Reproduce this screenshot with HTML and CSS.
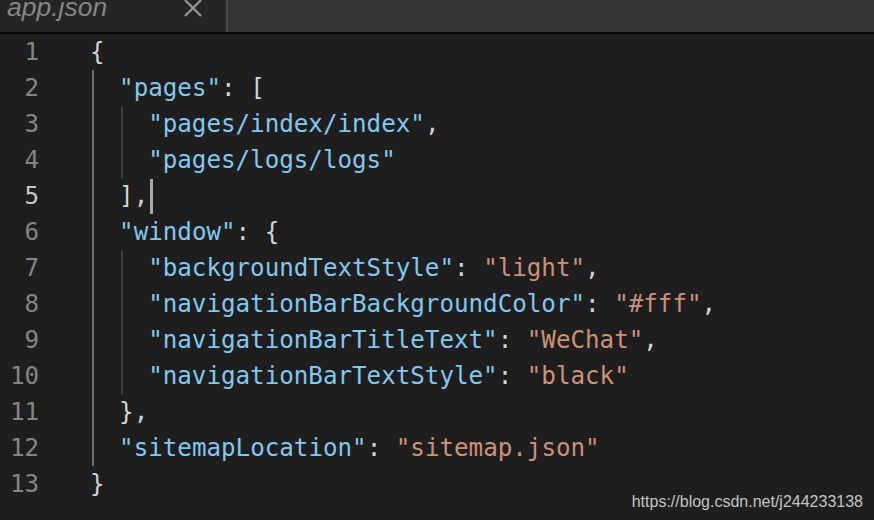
FILE: index.html
```html
<!DOCTYPE html>
<html>
<head>
<meta charset="utf-8">
<link rel="stylesheet" href="styles.css">
</head>
<body>
<div class="tabbar">
  <div class="tab">
    <span class="tab-title">app.json</span>
    <svg class="tab-close" width="20" height="20" viewBox="0 0 20 20"><path d="M2 0 L18 16 M18 0 L2 16" stroke="#9a9a9a" stroke-width="2.2" fill="none"/></svg>
  </div>
  <div class="tab-rest"></div>
</div>
<div class="editor">
  <div class="gutter">
    <div class="ln">1</div><div class="ln">2</div><div class="ln">3</div><div class="ln">4</div>
    <div class="ln active">5</div><div class="ln">6</div><div class="ln">7</div><div class="ln">8</div>
    <div class="ln">9</div><div class="ln">10</div><div class="ln">11</div><div class="ln">12</div><div class="ln">13</div>
  </div>
  <div class="code">
    <div class="line"><span class="p">{</span></div>
    <div class="line"><span class="g g1"></span><span class="ind1"></span><span class="k">"pages"</span><span class="p">: [</span></div>
    <div class="line"><span class="g g1"></span><span class="g g2"></span><span class="ind2"></span><span class="k">"pages/index/index"</span><span class="p">,</span></div>
    <div class="line"><span class="g g1"></span><span class="g g2"></span><span class="ind2"></span><span class="k">"pages/logs/logs"</span></div>
    <div class="line"><span class="g g1"></span><span class="ind1"></span><span class="p">],</span><span class="cursor"></span></div>
    <div class="line"><span class="g g1"></span><span class="ind1"></span><span class="k">"window"</span><span class="p">: {</span></div>
    <div class="line"><span class="g g1"></span><span class="g g2"></span><span class="ind2"></span><span class="k">"backgroundTextStyle"</span><span class="p">: </span><span class="s">"light"</span><span class="p">,</span></div>
    <div class="line"><span class="g g1"></span><span class="g g2"></span><span class="ind2"></span><span class="k">"navigationBarBackgroundColor"</span><span class="p">: </span><span class="s">"#fff"</span><span class="p">,</span></div>
    <div class="line"><span class="g g1"></span><span class="g g2"></span><span class="ind2"></span><span class="k">"navigationBarTitleText"</span><span class="p">: </span><span class="s">"WeChat"</span><span class="p">,</span></div>
    <div class="line"><span class="g g1"></span><span class="g g2"></span><span class="ind2"></span><span class="k">"navigationBarTextStyle"</span><span class="p">: </span><span class="s">"black"</span></div>
    <div class="line"><span class="g g1"></span><span class="ind1"></span><span class="p">},</span></div>
    <div class="line"><span class="g g1"></span><span class="ind1"></span><span class="k">"sitemapLocation"</span><span class="p">: </span><span class="s">"sitemap.json"</span></div>
    <div class="line"><span class="p">}</span></div>
  </div>
  <div class="watermark">https://blog.csdn.net/j244233138</div>
</div>
</body>
</html>
```
FILE: styles.css
```css
html, body {
  margin: 0;
  padding: 0;
  width: 874px;
  height: 520px;
  overflow: hidden;
  background: #1e1e1e;
}
.tabbar {
  display: flex;
  height: 32px;
  border-bottom: 2px solid #050505;
  background: #343434;
  overflow: hidden;
}
.tab {
  width: 226px;
  background: #252525;
  border-right: 2px solid #4a4a4a;
  display: flex;
  align-items: flex-start;
  position: relative;
}
.tab-title {
  font-family: "Liberation Sans", Arial, sans-serif;
  font-style: italic;
  font-size: 26.5px;
  line-height: 15px;
  color: #858585;
  margin-left: 7px;
}
.tab-close {
  position: absolute;
  left: 183px;
  top: 0;
}
.tab-rest {
  flex: 1;
}
.editor {
  display: flex;
  position: relative;
  height: 486px;
  font-family: "DejaVu Sans Mono", monospace;
  font-size: 24.2px;
  line-height: 36px;
}
.gutter {
  width: 39px;
  text-align: right;
  color: #858585;
}
.ln.active {
  color: #c6c6c6;
}
.code {
  margin-left: 51px;
  color: #d4d4d4;
}
.line {
  height: 36px;
  position: relative;
  display: flex;
  white-space: pre;
}
.ind1 { width: 29.1px; flex: none; }
.ind2 { width: 58.2px; flex: none; }
.g {
  position: absolute;
  top: 0;
  bottom: 0;
  width: 2px;
}
.g1 { left: 2px; background: #6e6e6e; }
.g2 { left: 30.5px; background: #3e3e3e; }
.k { color: #82c8ef; }
.s { color: #ce9178; }
.p { color: #d4d4d4; }
.cursor {
  width: 3px;
  height: 35px;
  margin-left: 2px;
  background: #a9a9a9;
  align-self: center;
}
.watermark {
  position: absolute;
  right: 11px;
  bottom: 9px;
  font-family: "Liberation Sans", Arial, sans-serif;
  font-size: 16px;
  line-height: 18px;
  color: #c4c4c4;
}
```
